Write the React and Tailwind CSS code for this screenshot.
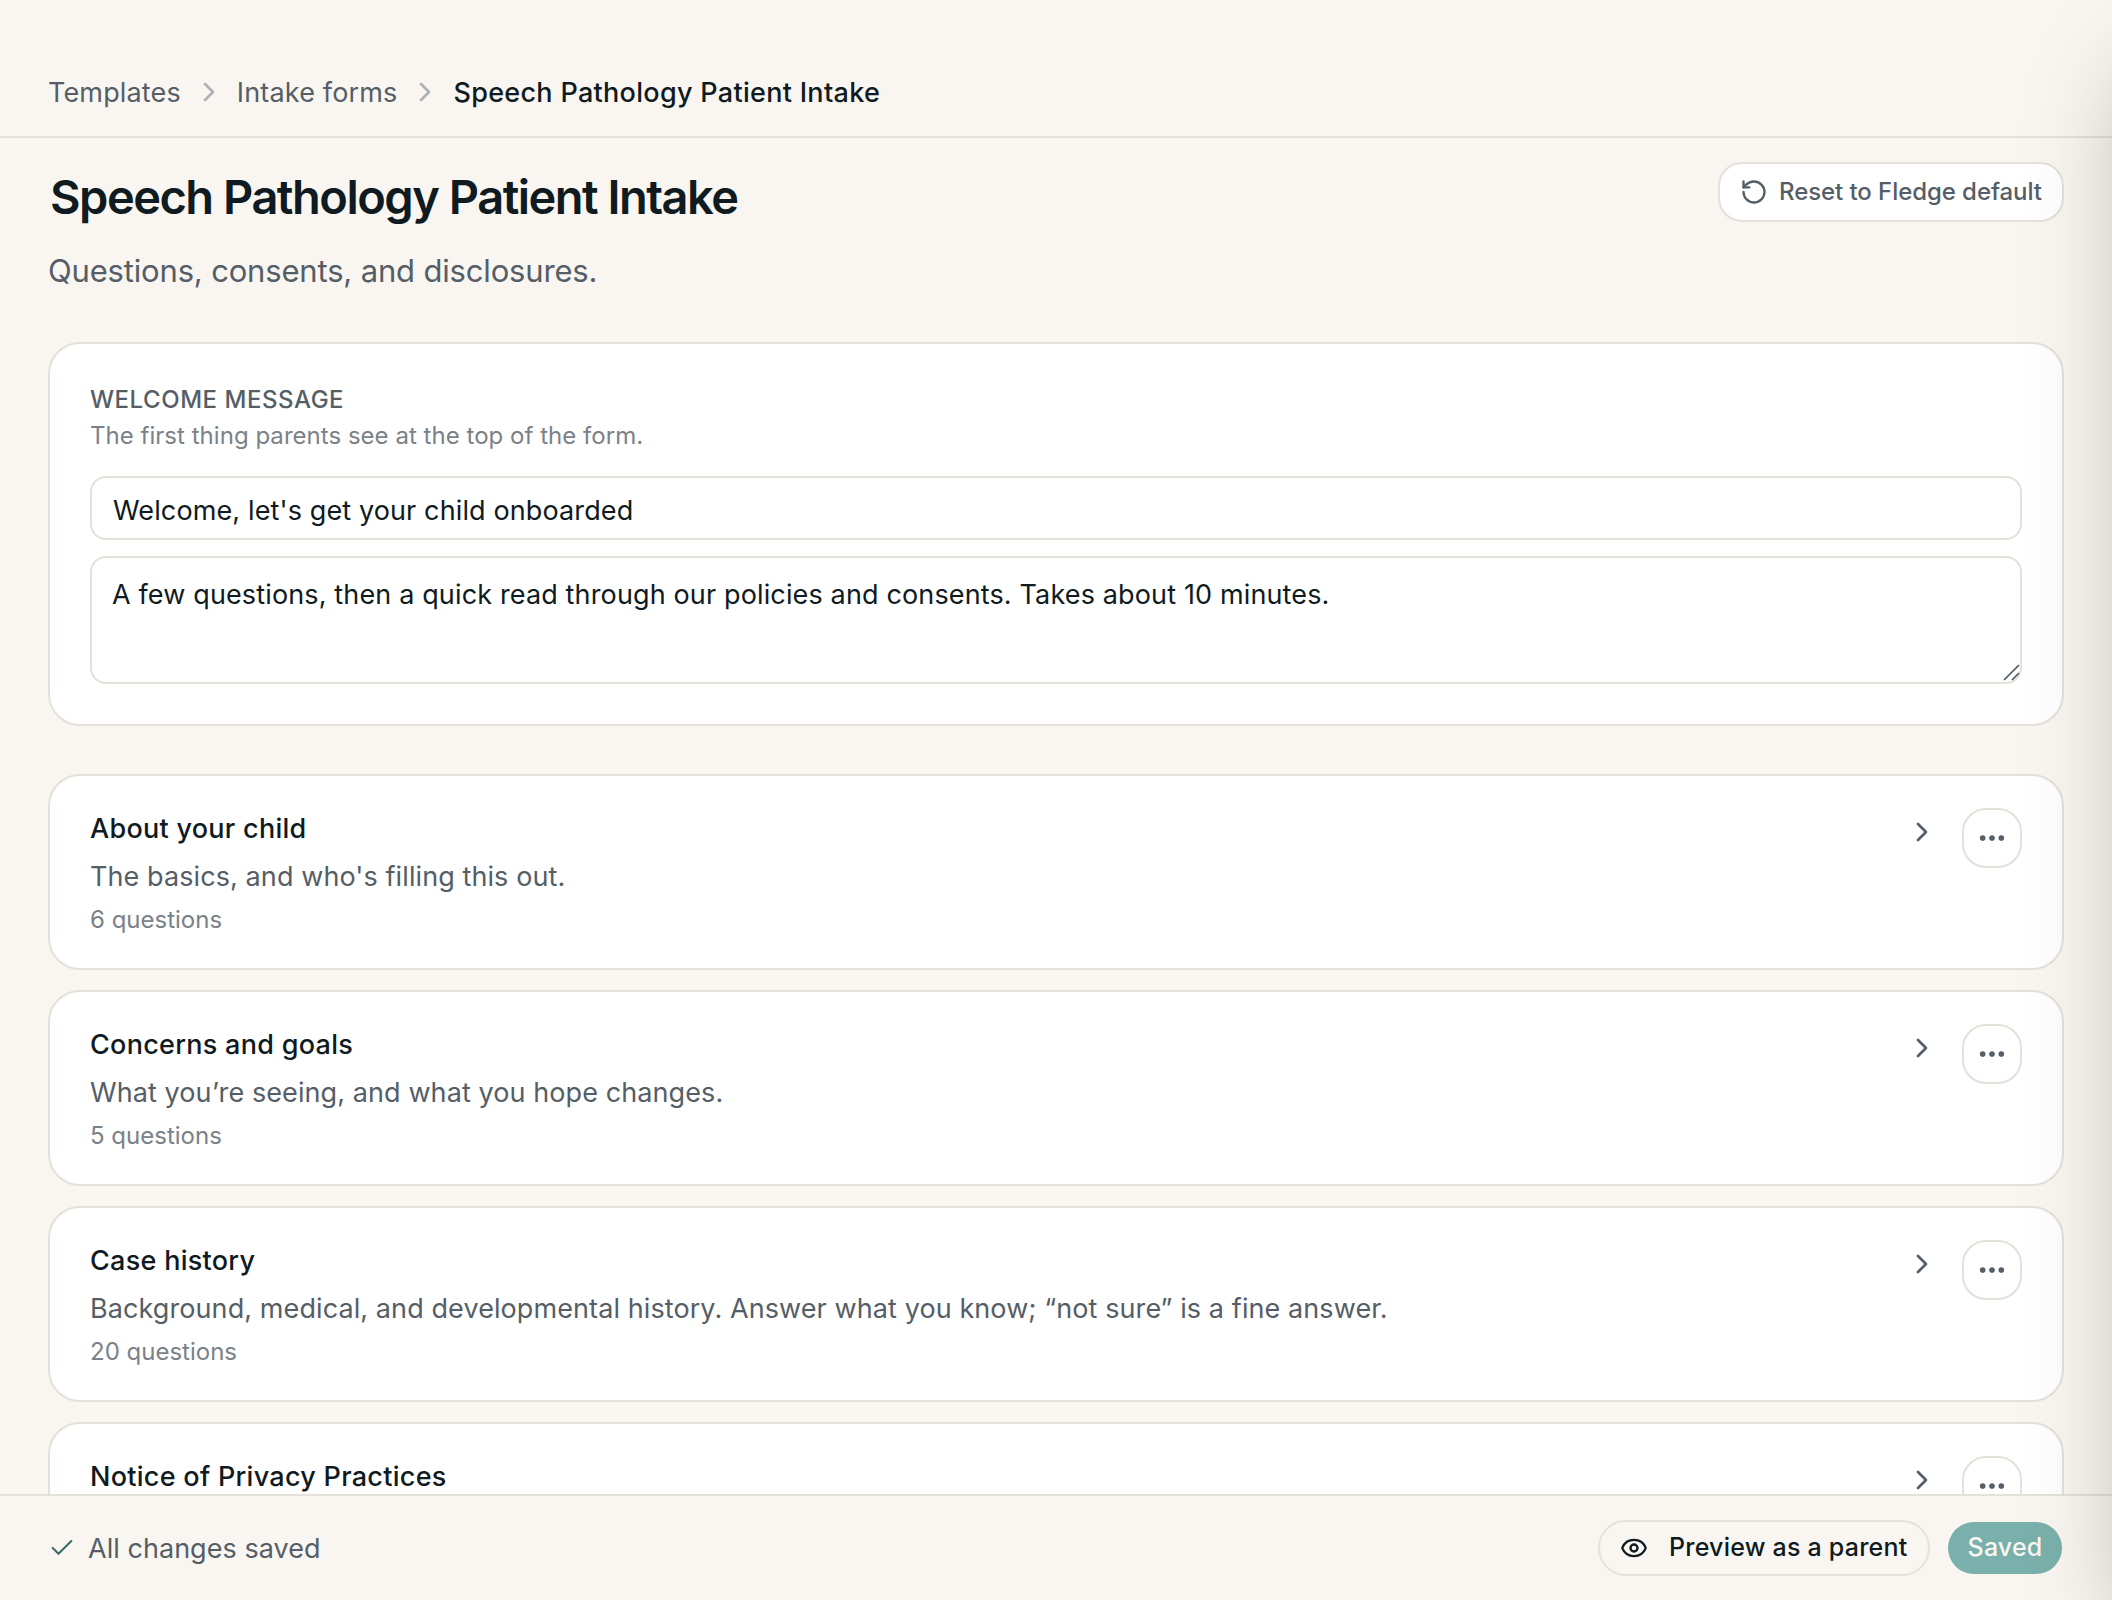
import React, { useState } from 'react';
import { Check, ChevronRight, Ellipsis, Eye, RotateCcw } from 'lucide-react';

const crumbs = ['Templates', 'Intake forms'];

const sections = [
    { id: 'about', title: 'About your child', description: "The basics, and who's filling this out.", count: 6 },
    { id: 'concerns', title: 'Concerns and goals', description: 'What you’re seeing, and what you hope changes.', count: 5 },
    { id: 'history', title: 'Case history', description: 'Background, medical, and developmental history. Answer what you know; “not sure” is a fine answer.', count: 20 },
    { id: 'privacy', title: 'Notice of Privacy Practices' },
];

function SectionCard({ section }) {
    return (
        <div className="flex h-[196px] shrink-0 items-start rounded-[32px] border-2 border-[#e4e0da] bg-white px-10 pt-8">
            <div className="flex-1 pt-px">
                <h2 className="text-[27px] leading-10 font-medium tracking-[0.28px] text-[#0f1a21]">{section.title}</h2>
                {section.description && (
                    <p className="mt-2 text-[27px] leading-10 tracking-[0.09px] text-[#555e66]">{section.description}</p>
                )}
                {section.count && (
                    <p className="mt-[5px] text-2xl leading-9 text-[#7b8188]">{section.count} questions</p>
                )}
            </div>
            <ChevronRight size={32} className="mt-2 mr-6 text-[#555e66]" />
            <button className="flex size-[60px] items-center justify-center rounded-3xl border-2 border-[#e4e0da] text-[#555e66]">
                <Ellipsis size={32} strokeWidth={2.25} />
            </button>
        </div>
    );
}

export default function App() {
    const [title, setTitle] = useState("Welcome, let's get your child onboarded");
    const [message, setMessage] = useState('A few questions, then a quick read through our policies and consents. Takes about 10 minutes.');

    return (
        <div className="relative flex h-screen flex-col overflow-hidden bg-[#f9f6f1] font-[Inter,sans-serif] text-[#0f1a21]">
            {/* Breadcrumb */}
            <header className="shrink-0 border-b-2 border-[#e4e0da] pt-12">
                <nav className="flex h-[88px] items-center gap-3 px-12 text-[27px] leading-10">
                    {crumbs.map(c => (
                        <React.Fragment key={c}>
                            <a className="pt-0.5 tracking-[0.15px] text-[#555e66]">{c}</a>
                            <ChevronRight size={32} className="text-[#adb1b4]" />
                        </React.Fragment>
                    ))}
                    <span className="pt-0.5 font-medium tracking-[0.3px]">Speech Pathology Patient Intake</span>
                </nav>
            </header>

            <main className="flex min-h-0 flex-1 flex-col overflow-hidden px-12 pt-6">
                <div className="flex shrink-0 items-start justify-between">
                    <div>
                        <h1 className="pl-0.5 text-[47px] leading-[70px] font-semibold tracking-[-1.5px]">Speech Pathology Patient Intake</h1>
                        <p className="mt-[15px] text-[31px] leading-[48px] tracking-[-0.17px] text-[#555e66]">Questions, consents, and disclosures.</p>
                    </div>
                    <button className="flex h-[60px] w-[346px] items-center gap-[11px] rounded-3xl border-2 border-[#e4e0da] bg-white pl-5 text-2xl font-medium tracking-[-0.07px] whitespace-nowrap text-[#555e66]">
                        <RotateCcw size={28} />
                        Reset to Fledge default
                    </button>
                </div>

                {/* Welcome message */}
                <section className="mt-[47px] flex shrink-0 flex-col rounded-[32px] border-2 border-[#e4e0da] bg-white p-10">
                    <h2 className="text-2xl leading-8 font-medium tracking-[0.54px] text-[#555e66] uppercase">Welcome message</h2>
                    <p className="mt-1 text-2xl leading-8 tracking-[0.03px] text-[#7b8188]">The first thing parents see at the top of the form.</p>
                    <input
                        className="mt-6 h-16 rounded-2xl border-2 border-[#e4e0da] px-[21px] pt-1 text-[27px] tracking-[0.12px] outline-none"
                        value={title}
                        onChange={e => setTitle(e.target.value)}
                    />
                    <div className="relative mt-4 flex">
                        <textarea
                            className="h-32 w-full resize-none rounded-2xl border-2 border-[#e4e0da] px-5 pt-[17px] text-[27px] leading-10 tracking-[0.14px] outline-none"
                            value={message}
                            onChange={e => setMessage(e.target.value)}
                        />
                        <svg className="pointer-events-none absolute right-0.5 bottom-0.5 size-[18px]" viewBox="0 0 18 18" fill="none" stroke="#4f5862" strokeWidth="1.7" strokeLinecap="round">
                            <path d="M2.5 15.5l14-14M10.5 15.5l6-6" />
                        </svg>
                    </div>
                </section>

                {/* Sections */}
                <div className="mt-12 flex flex-col gap-5">
                    {sections.map(s => <SectionCard key={s.id} section={s} />)}
                </div>
            </main>

            {/* Save bar */}
            <footer className="flex h-[106px] shrink-0 items-center border-t-2 border-[#e4e0da] px-12">
                <Check size={28} strokeWidth={1.75} className="text-[#376c6a]" />
                <span className="ml-3 flex-1 pt-0.5 text-[27px] leading-10 tracking-[0.04px] text-[#555e66]">All changes saved</span>
                <button className="flex h-14 w-[332px] items-center gap-[21px] rounded-full border-2 border-[#e4e0da] pl-5 text-[25px] font-medium tracking-[0.22px] whitespace-nowrap">
                    <Eye size={28} />
                    Preview as a parent
                </button>
                <button className="ml-4 h-14 w-[118px] rounded-full border-2 border-transparent bg-[#7ab0ab] bg-clip-padding text-[25px] font-medium tracking-[0.17px] text-[#f9f6f0]">
                    Saved
                </button>
            </footer>

            {/* Side panel, closed: only its shadow reaches the page */}
            <div className="pointer-events-none absolute inset-y-0 left-full w-[800px] shadow-[0_50px_100px_-24px_rgba(0,0,0,0.3)]" />
        </div>
    );
}
